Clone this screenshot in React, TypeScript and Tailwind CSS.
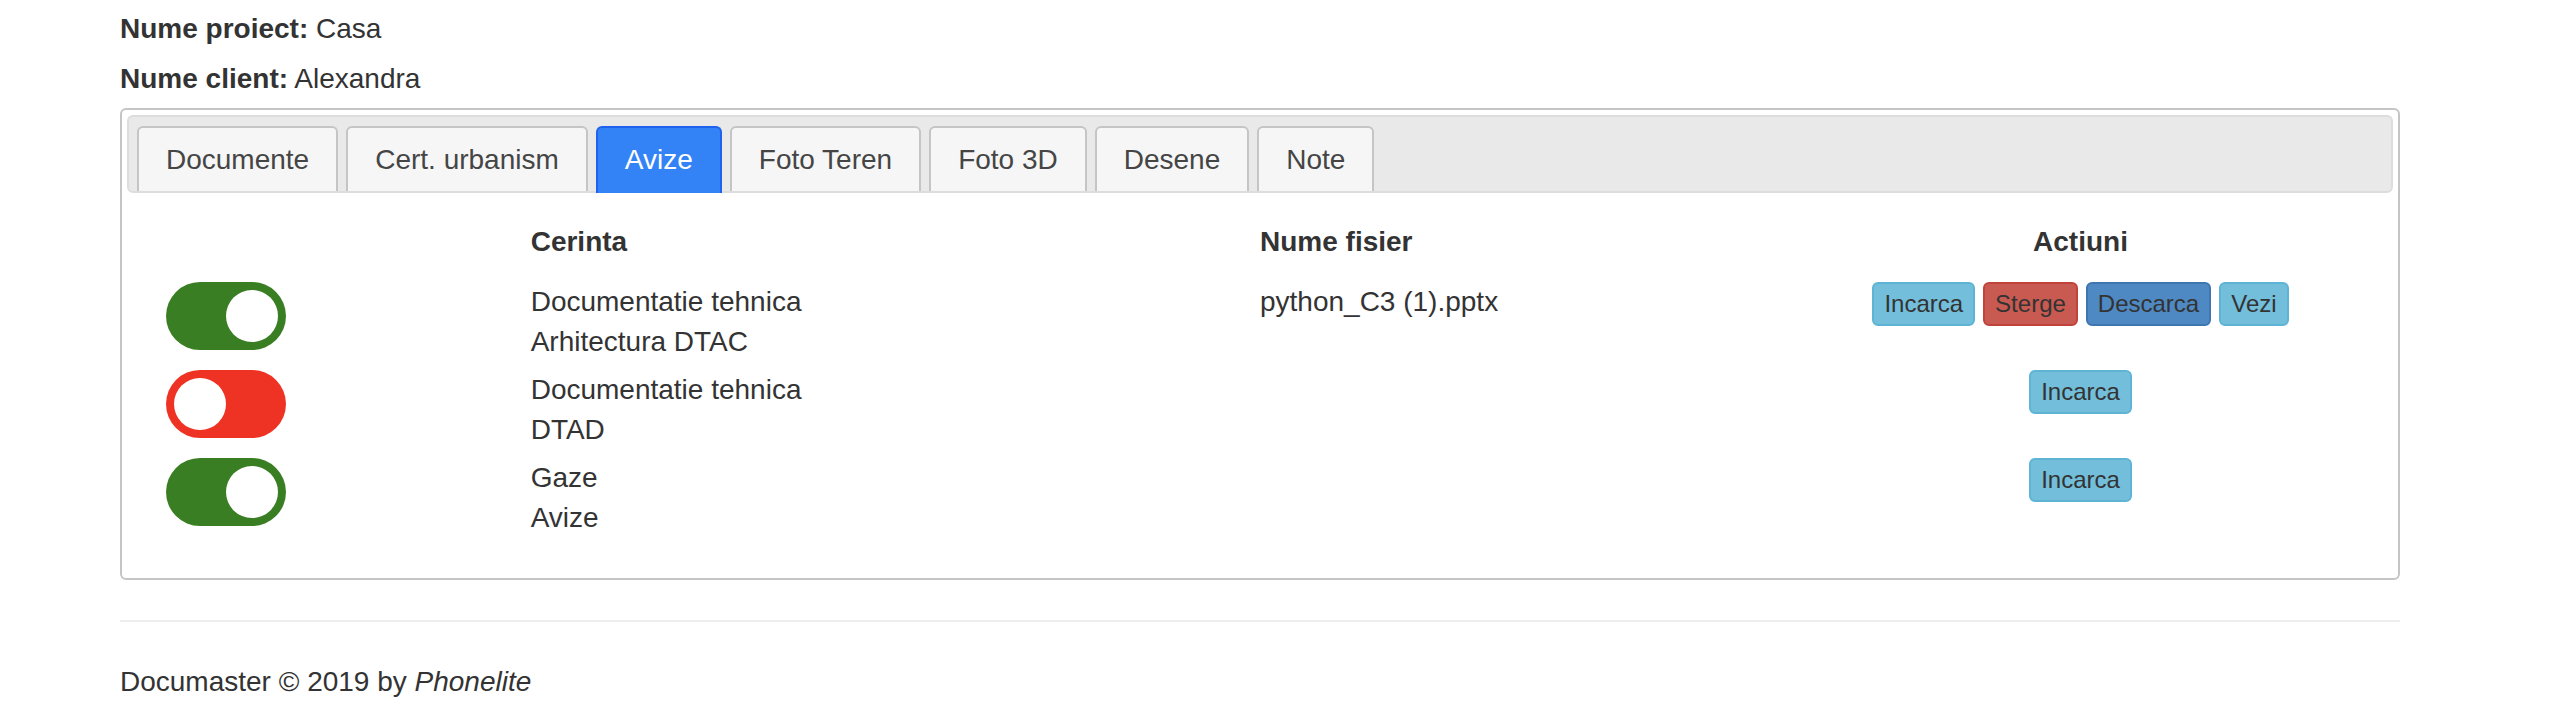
import React from "react";

type Requirement = {
  on: boolean;
  lines: [string, string];
  file: string;
  actions: string[];
};

const tabs = ["Documente", "Cert. urbanism", "Avize", "Foto Teren", "Foto 3D", "Desene", "Note"];

const requirements: Requirement[] = [
  {
    on: true,
    lines: ["Documentatie tehnica", "Arhitectura DTAC"],
    file: "python_C3 (1).pptx",
    actions: ["Incarca", "Sterge", "Descarca", "Vezi"],
  },
  { on: false, lines: ["Documentatie tehnica", "DTAD"], file: "", actions: ["Incarca"] },
  { on: true, lines: ["Gaze", "Avize"], file: "", actions: ["Incarca"] },
];

const actionStyle: Record<string, string> = {
  Incarca: "bg-[#72bedb] border-[#5db4d5]",
  Vezi: "bg-[#72bedb] border-[#5db4d5]",
  Sterge: "bg-[#c95a51] border-[#c0443b]",
  Descarca: "bg-[#4e89c3] border-[#3e76b0]",
};

function Toggle({ on }: { on: boolean }) {
  return (
    <div
      className={`flex h-[68px] w-[120px] items-center rounded-full px-[8px] ${
        on ? "justify-end bg-[#3a7e23]" : "justify-start bg-[#ee3325]"
      }`}
    >
      <div className="h-[52px] w-[52px] rounded-full bg-white" />
    </div>
  );
}

export default function App() {
  return (
    <div className="min-h-[728px] w-[2568px] bg-white font-['Liberation_Sans',Arial,sans-serif] text-[28px] leading-[40px] text-[#333]">
      <div className="ml-[120px] w-[2280px] pt-[9px]">
        <div className="mb-[10px] h-[40px]">
          <b>Nume proiect:</b> Casa
        </div>
        <div className="mb-[9px] h-[40px]">
          <b>Nume client:</b> Alexandra
        </div>

        <div className="rounded-[6px] border-2 border-[#c5c5c5] p-[5px]">
          <div className="flex gap-[8px] rounded-[6px] border-2 border-[#dddddd] bg-[#e9e9e9] pl-[8px] pt-[9px]">
            {tabs.map((t) =>
              t === "Avize" ? (
                <div
                  key={t}
                  className="-mb-[2px] h-[67px] rounded-t-[6px] border-2 border-b-0 border-[#1f62ee] bg-[#3483f6] px-[27px] pt-[12px] text-white"
                >
                  {t}
                </div>
              ) : (
                <div
                  key={t}
                  className="h-[65px] rounded-t-[6px] border-2 border-b-0 border-[#c5c5c5] bg-[#f6f6f6] px-[27px] pt-[12px] text-[#454545]"
                >
                  {t}
                </div>
              )
            )}
          </div>

          <div className="flex flex-col px-[39px] pb-[35px] pt-[29px]">
            <div className="mb-[20px] grid h-[40px] grid-cols-12 font-bold">
              <div className="col-span-2" />
              <div className="col-span-4">Cerinta</div>
              <div className="col-span-3">Nume fisier</div>
              <div className="col-span-3 text-center">Actiuni</div>
            </div>

            <div className="flex flex-col gap-[8px]">
              {requirements.map((r, i) => (
                <div key={i} className="grid h-[80px] grid-cols-12">
                  <div className="col-span-2">
                    <Toggle on={r.on} />
                  </div>
                  <div className="col-span-4">
                    <div>{r.lines[0]}</div>
                    <div>{r.lines[1]}</div>
                  </div>
                  <div className="col-span-3">{r.file}</div>
                  <div className="col-span-3 flex items-start justify-center gap-[8px]">
                    {r.actions.map((a) => (
                      <span
                        key={a}
                        className={`rounded-[6px] border-2 px-[10px] py-[2px] text-[24px] leading-[36px] text-[#333] ${actionStyle[a]}`}
                      >
                        {a}
                      </span>
                    ))}
                  </div>
                </div>
              ))}
            </div>
          </div>
        </div>

        <hr className="my-[40px] border-t-2 border-[#eeeeee]" />

        <footer className="h-[40px]">
          Documaster © 2019 by <em>Phonelite</em>
        </footer>
      </div>
    </div>
  );
}
